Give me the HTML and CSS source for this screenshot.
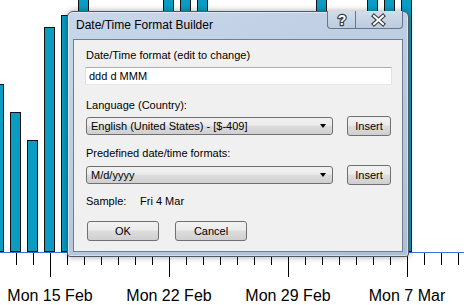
FILE: index.html
```html
<!DOCTYPE html>
<html>

<head>
  <link rel="stylesheet" href="styles.css">
</head>

<body>
  <div class="screen">
    <svg class="chart" width="464" height="305" viewBox="0 0 464 305">
      <!-- bars, one per day; x = 50 + 17 * day - 6 -->
      <rect class="bar" x="-6.5" y="84.5" width="10" height="167"/>
      <rect class="bar" x="10.5" y="112.5" width="10" height="139"/>
      <rect class="bar" x="27.5" y="140.5" width="10" height="111"/>
      <rect class="bar" x="44.5" y="27.5" width="10" height="224"/>
      <rect class="bar" x="61.5" y="15.5" width="10" height="236"/>
      <rect class="bar" x="78.5" y="-5" width="10" height="256.5"/>
      <rect class="bar" x="163.5" y="-5" width="10" height="256.5"/>
      <rect class="bar" x="180.5" y="-5" width="10" height="256.5"/>
      <rect class="bar" x="197.5" y="-5" width="10" height="256.5"/>
      <rect class="bar" x="316.5" y="-5" width="10" height="256.5"/>
      <rect class="bar" x="367.5" y="-5" width="10" height="256.5"/>
      <rect class="bar" x="384.5" y="-5" width="10" height="256.5"/>
      <rect class="bar" x="401.5" y="-5" width="10" height="256.5"/>

      <line class="axis" x1="0" y1="252.5" x2="464" y2="252.5"/>

      <!-- day ticks -->
      <path class="tick" d="M16.5 253V265 M33.5 253V265 M67.5 253V265 M84.5 253V265 M101.5 253V265 M118.5 253V265 M135.5 253V265 M152.5 253V265 M186.5 253V265 M203.5 253V265 M220.5 253V265 M237.5 253V265 M254.5 253V265 M271.5 253V265 M305.5 253V265 M322.5 253V265 M339.5 253V265 M356.5 253V265 M373.5 253V265 M390.5 253V265 M424.5 253V265 M441.5 253V265 M458.5 253V265"/>
      <!-- week ticks -->
      <path class="tick" d="M50.5 253V277 M169.5 253V277 M288.5 253V277 M407.5 253V277"/>

      <text class="week-label" x="50" y="301">Mon 15 Feb</text>
      <text class="week-label" x="169" y="301">Mon 22 Feb</text>
      <text class="week-label" x="288" y="301">Mon 29 Feb</text>
      <text class="week-label" x="407" y="301">Mon 7 Mar</text>
    </svg>

    <div class="dialog">
      <div class="titlebar">
        <span class="title">Date/Time Format Builder</span>
        <div class="caption-buttons">
          <div class="cap-btn help">
            <svg width="28" height="18" viewBox="0 0 28 18">
              <text class="cap-glyph" x="14" y="14">?</text>
            </svg>
          </div>
          <div class="cap-btn close">
            <svg width="45" height="18" viewBox="0 0 45 18">
              <path class="x-out" d="M18 5L27 13M27 5L18 13"/>
              <path class="x-in" d="M18 5L27 13M27 5L18 13"/>
            </svg>
          </div>
        </div>
      </div>

      <div class="client">
        <div class="field-label">Date/Time format (edit to change)</div>
        <div class="text-input">ddd d MMM</div>

        <div class="field-label gap-lang">Language (Country):</div>
        <div class="combo-row">
          <div class="combo">
            <span>English (United States) - [$-409]</span>
            <span class="arrow"></span>
          </div>
          <div class="btn insert">Insert</div>
        </div>

        <div class="field-label gap-pre">Predefined date/time formats:</div>
        <div class="combo-row second">
          <div class="combo">
            <span>M/d/yyyy</span>
            <span class="arrow"></span>
          </div>
          <div class="btn insert">Insert</div>
        </div>

        <div class="sample">
          <span class="sample-key">Sample:</span>
          <span>Fri 4 Mar</span>
        </div>

        <div class="button-row">
          <div class="btn wide">OK</div>
          <div class="btn wide">Cancel</div>
        </div>
      </div>
    </div>
  </div>
</body>
</html>
```

FILE: styles.css
```css
body
{
   margin:0;
   background:#fff;
}

.screen
{
   position:relative;
   width:464px;
   height:305px;
   overflow:hidden;
}

.chart
{
   display:block;
}
.bar
{
   fill:#0a9cc3;
   stroke:#111;
   stroke-width:1;
}
.axis
{
   stroke:#3d6fd6;
   stroke-width:1;
}
.tick
{
   stroke:#000;
   stroke-width:1;
   fill:none;
}
.week-label
{
   font-family:"Liberation Sans", Arial, sans-serif;
   font-size:16px;
   text-anchor:middle;
   fill:#000;
}

/* dialog window laid over the chart */
.dialog
{
   position:absolute;
   left:67px;
   top:11px;
   width:342px;
   height:246px;
   box-sizing:border-box;
   border:1px solid #4e5a6a;
   border-radius:6px 6px 3px 3px;
   padding:0 5px 4px 5px;
   background:linear-gradient(160deg, #c9d7ea, #b7c8de 60%, #adbfd6);
   box-shadow:0 0 6px rgba(0,0,0,0.35), inset 0 0 0 1px rgba(255,255,255,0.45);
   font-family:"Liberation Sans", Arial, sans-serif;
}

.titlebar
{
   height:27px;
}
.title
{
   display:block;
   padding-left:3px;
   font-size:12px;
   line-height:26px;
   color:#000;
}

.caption-buttons
{
   position:absolute;
   top:-1px;
   right:5px;
   display:flex;
}
.cap-btn
{
   height:18px;
   box-sizing:border-box;
   border:1px solid #66778d;
   border-top:none;
   background:linear-gradient(#d2ddeb, #bccbdf);
}
.cap-btn svg
{
   display:block;
}
.help
{
   width:29px;
   border-radius:0 0 0 4px;
}
.close
{
   width:47px;
   border-left:none;
   border-radius:0 0 4px 0;
}
.cap-glyph
{
   font-family:"Liberation Sans", Arial, sans-serif;
   font-weight:bold;
   font-size:14px;
   text-anchor:middle;
   fill:#fff;
   stroke:#3c3c3c;
   stroke-width:2.4px;
   stroke-linejoin:round;
   paint-order:stroke;
}
.x-out
{
   stroke:#3c3c3c;
   stroke-width:4.2;
   stroke-linecap:square;
   fill:none;
}
.x-in
{
   stroke:#fff;
   stroke-width:2;
   stroke-linecap:square;
   fill:none;
}

.client
{
   height:213px;
   box-sizing:border-box;
   border:1px solid #6f7e92;
   background:#f0f0f0;
   padding:9px 0 0 12px;
   font-size:11px;
   color:#000;
}

.field-label
{
   line-height:13px;
}
.gap-lang
{
   margin-top:14px;
}
.gap-pre
{
   margin-top:11px;
}

.text-input
{
   width:307px;
   height:18px;
   box-sizing:border-box;
   margin:5px 0 0 -1px;
   padding-left:3px;
   border:1px solid;
   border-color:#abadb3 #e2e3ea #e3e9ef #dbdfe6;
   background:#fff;
   line-height:16px;
}

.combo-row
{
   display:flex;
   align-items:center;
   gap:14px;
   height:20px;
   margin-top:4px;
}
.combo-row.second
{
   margin-top:5px;
}
.combo
{
   display:flex;
   align-items:center;
   width:247px;
   height:18px;
   box-sizing:border-box;
   padding-left:4px;
   border:1px solid #707070;
   border-radius:3px;
   background:linear-gradient(#f2f2f2, #ebebeb 45%, #dddddd 50%, #cfcfcf);
}
.arrow
{
   margin-left:auto;
   margin-right:6px;
   width:0;
   height:0;
   border-left:3.5px solid transparent;
   border-right:3.5px solid transparent;
   border-top:4px solid #000;
}

.btn
{
   height:20px;
   box-sizing:border-box;
   border:1px solid #707070;
   border-radius:3px;
   background:linear-gradient(#f2f2f2, #ebebeb 45%, #dddddd 50%, #cfcfcf);
   text-align:center;
   line-height:18px;
}
.insert
{
   width:44px;
}
.wide
{
   width:72px;
}

.sample
{
   margin-top:10px;
   line-height:13px;
}
.sample-key
{
   display:inline-block;
   width:51px;
}

.button-row
{
   display:flex;
   gap:16px;
   margin:13px 0 0 1px;
}
```
